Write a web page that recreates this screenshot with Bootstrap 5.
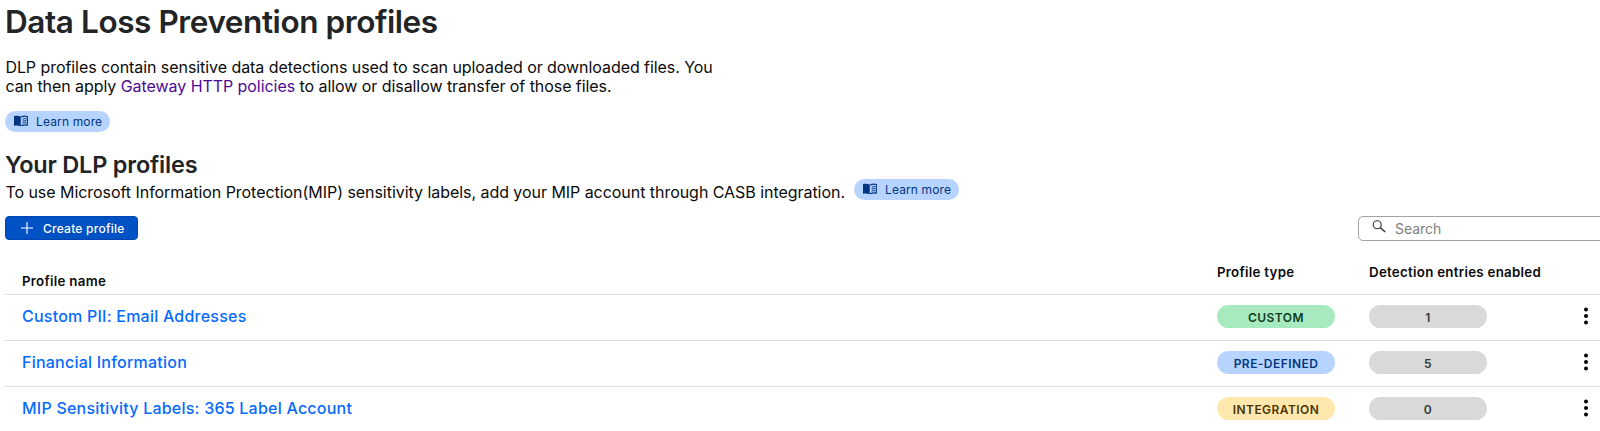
<!DOCTYPE html>
<html lang="en">
<head>
<meta charset="utf-8">
<meta name="viewport" content="width=device-width, initial-scale=1">
<title>Data Loss Prevention profiles</title>
<link href="https://cdn.jsdelivr.net/npm/bootstrap@5.3.0/dist/css/bootstrap.min.css" rel="stylesheet">
<style>
  body { font-family: Inter, "Liberation Sans", sans-serif; font-size: 16px; color: #0b0b0b; background: #fff; overflow: hidden; }
  .page { padding: 2px 0 0 5px; }
  .page-title { font-size: 31.5px; line-height: 39px; letter-spacing: -.42px; color: #222426; }
  .intro { width: 740px; margin-top: 17px; padding-left: .4px; line-height: 18.7px; letter-spacing: -.06px; }
  .intro a { color: #4f0a94; }
  .learn-chip { width: 105px; height: 21px; padding-left: 9px; gap: 8px; font-size: 12px; letter-spacing: .14px; line-height: 21px; color: #003681; background: #b6d4ff; }
  .learn-chip svg { margin-top: -2px; }
  .section-title { font-size: 23.5px; line-height: 29px; letter-spacing: -.21px; color: #222426; margin-top: 18px; }
  .mip-note { height: 23px; gap: 9px; }
  .mip-note p { line-height: 20px; letter-spacing: -.045px; margin-top: 3px; padding-left: .4px; }
  .toolbar { height: 25px; margin-top: 14px; }
  .btn-create { width: 133px; height: 24px; padding: 1px 0 0 15px; gap: 10px; border: 1px solid #0045b0; border-radius: 4px; background: #0051c3; color: #fff; font-size: 12px; font-weight: 500; letter-spacing: .24px; line-height: 21px; }
  .btn-create svg { margin-top: -1px; }
  .search-box { width: 260px; height: 25px; margin-right: -18px; padding-left: 13px; gap: 9px; border: 1px solid #a3a3a3; border-radius: 5px; }
  .search-box input { font-size: 14px; letter-spacing: -.04px; color: #333; outline: 0; width: 180px; }
  .search-box input::placeholder { color: #808080; opacity: 1; }
  .profiles { table-layout: fixed; width: 1595px; border-collapse: separate; border-spacing: 0; }
  .profiles th, .profiles td { padding: 0; border-bottom: 1px solid #dfdfdf; }
  .profiles th { height: 54px; vertical-align: top; padding-top: 21px; font-size: 13.3px; line-height: 20px; font-weight: 600; letter-spacing: .28px; }
  .profiles th.col-name { padding-top: 30px; line-height: 20px; }
  .profiles td { height: 46px; vertical-align: top; }
  .profiles .col-name { padding-left: 17px; }
  .profiles td a { display: block; padding-top: 11px; line-height: 20px; letter-spacing: .23px; font-weight: 500; color: #056aff; }
  .pill { display: block; width: 118px; height: 23px; margin-top: 10px; line-height: 25px; font-size: 12px; font-weight: 600; letter-spacing: .44px; text-align: center; }
  .pill-custom { background: #a8eac0; color: #0f3d1e; }
  .pill-predefined { background: #b6d4ff; color: #003681; }
  .pill-integration { background: #ffe8ae; color: #4a3500; }
  .pill-count { background: #d9d9d9; color: #36393a; }
  .btn-more { display: block; margin: 12px 0 0 9px; }
</style>
<script src="https://cdn.jsdelivr.net/npm/bootstrap@5.3.0/dist/js/bootstrap.bundle.min.js"></script>
</head>
<body>
<svg class="d-none">
  <symbol id="book" viewBox="0 0 14 12">
    <path fill="#003681" d="M0 1.2C2.3.6 4.7.6 6.8 1.5V11.3C4.7 10.3 2.3 10.2 0 10.8Z"/>
    <path fill="none" stroke="#003681" stroke-width="1.2" d="M7.2 1.9C9.2 1.1 11.3 1 13.3 1.5V10.1C11.3 9.7 9.2 9.8 7.2 10.7"/>
    <path fill="none" stroke="#003681" stroke-width="1" d="M8.6 4.2Q10.3 3.5 12 3.7M8.6 6.2Q10.3 5.5 12 5.7M8.6 8.2Q10.3 7.5 12 7.7"/>
  </symbol>
  <symbol id="dots" viewBox="0 0 6 18">
    <circle cx="3" cy="2.5" r="2"/><circle cx="3" cy="9" r="2"/><circle cx="3" cy="15.5" r="2"/>
  </symbol>
</svg>
<main class="page">
  <h1 class="page-title fw-semibold mb-0">Data Loss Prevention profiles</h1>
  <p class="intro mb-0">DLP profiles contain sensitive data detections used to scan uploaded or downloaded files. You<br>can then apply <a href="#" class="text-decoration-none">Gateway HTTP policies</a> to allow or disallow transfer of those files.</p>
  <a href="#" class="learn-chip d-flex align-items-center rounded-pill text-decoration-none" style="margin-top:15.6px"><svg width="14" height="12"><use href="#book"/></svg>Learn more</a>

  <h2 class="section-title fw-semibold mb-0">Your DLP profiles</h2>
  <div class="mip-note d-flex align-items-start">
    <p class="mb-0">To use Microsoft Information Protection(MIP) sensitivity labels, add your MIP account through CASB integration.</p>
    <a href="#" class="learn-chip d-flex align-items-center rounded-pill text-decoration-none"><svg width="14" height="12"><use href="#book"/></svg>Learn more</a>
  </div>

  <div class="toolbar d-flex justify-content-between align-items-start">
    <button type="button" class="btn btn-create d-flex align-items-center">
      <svg width="12" height="12" viewBox="0 0 12 12" stroke="#fff" stroke-width="1.1"><path d="M6 0V12M0 6H12"/></svg>Create profile
    </button>
    <div class="search-box d-flex align-items-center">
      <svg width="14" height="13" viewBox="0 0 14 13" fill="none" stroke="#333" style="margin-top:-4px"><circle cx="5.2" cy="4.8" r="4" stroke-width="1.1"/><path stroke-width="1.4" d="M8.2 7.6L13.2 12"/></svg>
      <input type="text" class="border-0 p-0 bg-transparent" placeholder="Search" aria-label="Search">
    </div>
  </div>

  <table class="profiles">
    <colgroup><col><col style="width:152px"><col style="width:205px"><col style="width:26px"></colgroup>
    <thead>
      <tr><th class="col-name">Profile name</th><th>Profile type</th><th>Detection entries enabled</th><th></th></tr>
    </thead>
    <tbody>
      <tr>
        <td class="col-name"><a href="#" class="text-decoration-none">Custom PII: Email Addresses</a></td>
        <td><span class="pill pill-custom rounded-pill">CUSTOM</span></td>
        <td><span class="pill pill-count rounded-pill">1</span></td>
        <td><svg class="btn-more" width="6" height="18"><use href="#dots"/></svg></td>
      </tr>
      <tr>
        <td class="col-name"><a href="#" class="text-decoration-none">Financial Information</a></td>
        <td><span class="pill pill-predefined rounded-pill">PRE-DEFINED</span></td>
        <td><span class="pill pill-count rounded-pill">5</span></td>
        <td><svg class="btn-more" width="6" height="18"><use href="#dots"/></svg></td>
      </tr>
      <tr>
        <td class="col-name"><a href="#" class="text-decoration-none">MIP Sensitivity Labels: 365 Label Account</a></td>
        <td><span class="pill pill-integration rounded-pill">INTEGRATION</span></td>
        <td><span class="pill pill-count rounded-pill">0</span></td>
        <td><svg class="btn-more" width="6" height="18"><use href="#dots"/></svg></td>
      </tr>
    </tbody>
  </table>
</main>
</body>
</html>
